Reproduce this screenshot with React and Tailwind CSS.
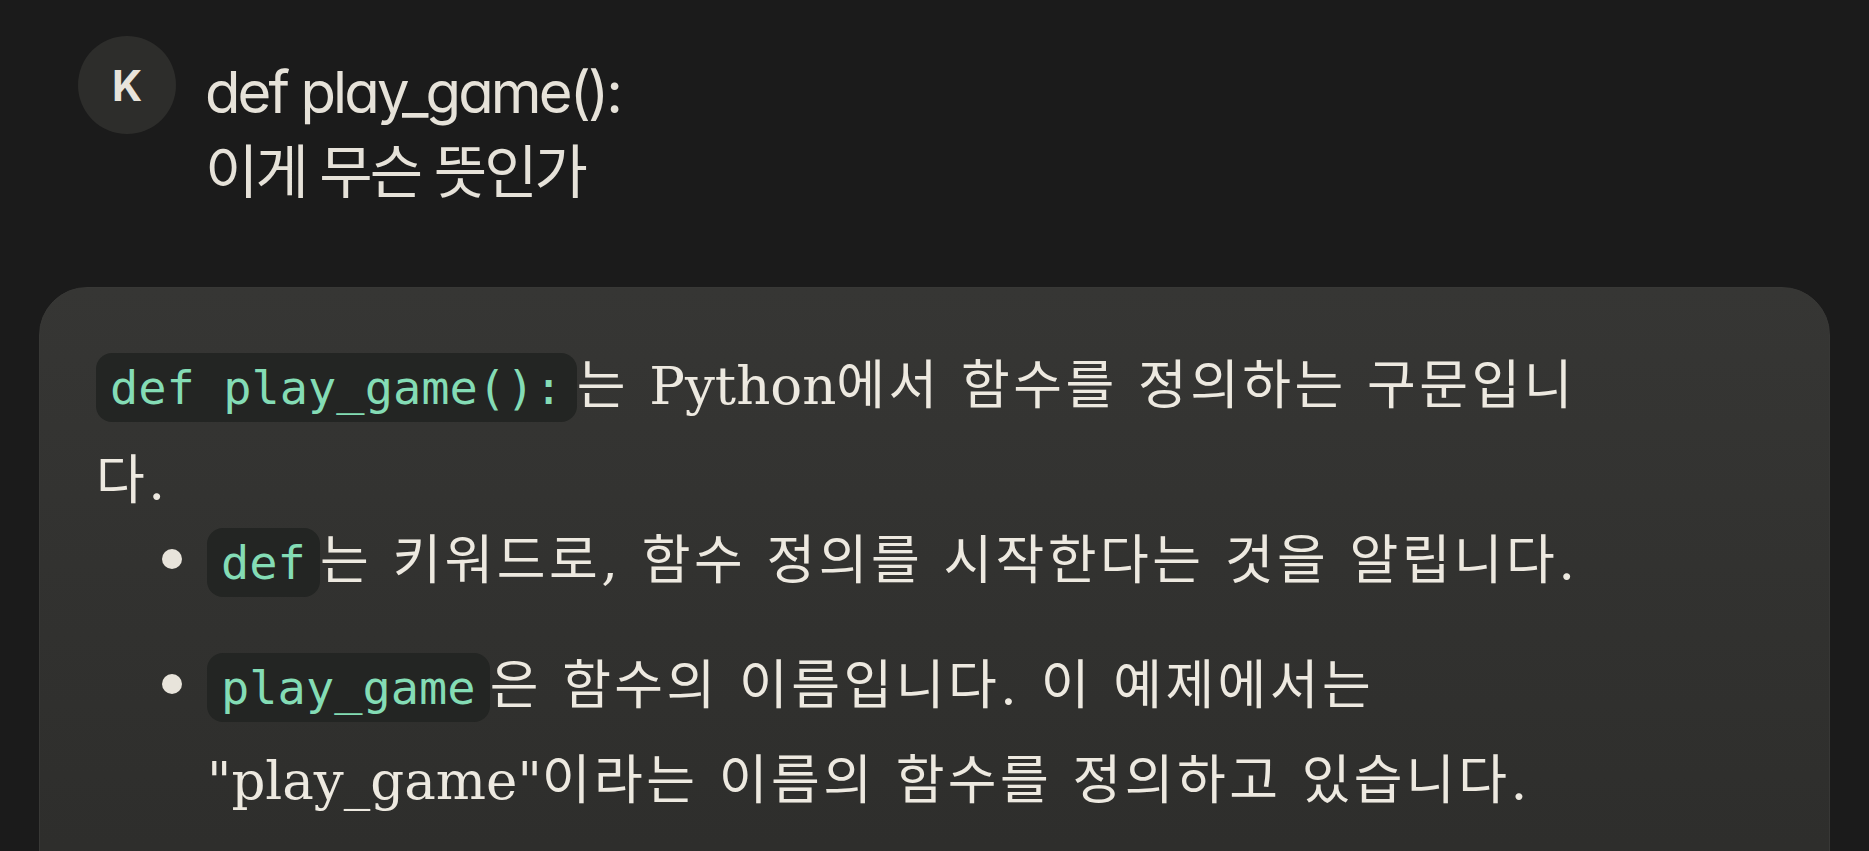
import React from 'react';

const serif = "font-['DejaVu_Serif','Noto_Sans_CJK_KR',serif]";
const mono = "font-['DejaVu_Sans_Mono','Liberation_Mono',monospace]";

// inline code chip
const Code = ({ children }) => (
    <code className={`${mono} text-[47px] leading-none tracking-normal text-[#84dcb5] bg-[#232523] rounded-[16px] px-[14px] py-[7px]`}>
        {children}
    </code>
);

// latin words keep normal spacing, hangul gets a bit of tracking
const En = ({ children }) => <span className="tracking-normal">{children}</span>;

const Bullet = ({ children, className = '' }) => (
    <li className={`flex ${className}`}>
        <span className="w-[111px] shrink-0 pt-[36px] pl-[66px]">
            <span className="block w-[20px] h-[20px] rounded-full bg-[#e8e4db]" />
        </span>
        <div className="leading-[95px] whitespace-nowrap">{children}</div>
    </li>
);

const App = () => {
    return (
        <div className="w-full h-[851px] overflow-hidden bg-[#1b1b1b]">
            {/* User message */}
            <div className="flex items-start gap-[29px] pl-[78px] pt-[36px]">
                <div className="w-[98px] h-[98px] rounded-full bg-[#2d2d2b] flex items-center justify-center shrink-0 font-['Inter','Noto_Sans',sans-serif] font-bold text-[42px] text-[#e8e4db]">
                    K
                </div>
                <div className="mt-[16px] font-['Inter','Noto_Sans_CJK_KR',sans-serif] [font-feature-settings:'cv11'] text-[58px] leading-[80px] tracking-[-0.05em] text-[#e6e2d9] whitespace-nowrap">
                    def play_game():
                    <br />
                    이게 무슨 뜻인가
                </div>
            </div>

            {/* Assistant answer card */}
            <div className={`mx-[39px] mt-[75px] h-[700px] rounded-[48px] border border-[#383836] bg-linear-to-b from-[#363634] to-[#2c2c2a] pt-[50px] pl-[56px] ${serif} text-[53px] tracking-[0.065em] text-[#ede9e0]`}>
                <p className="leading-[95px] whitespace-nowrap">
                    <Code>def play_game():</Code>는 <En>Python</En>에서 함수를 정의하는 구문입니
                    <br />
                    다.
                </p>
                <ul className="-mt-[15px]">
                    <Bullet>
                        <Code>def</Code>는 키워드로, 함수 정의를 시작한다는 것을 알립니다.
                    </Bullet>
                    <Bullet className="mt-[30px]">
                        <Code>play_game</Code>은 함수의 이름입니다. 이 예제에서는
                        <br />
                        <En>"play_game"</En>이라는 이름의 함수를 정의하고 있습니다.
                    </Bullet>
                </ul>
            </div>
        </div>
    );
};

export default App;
